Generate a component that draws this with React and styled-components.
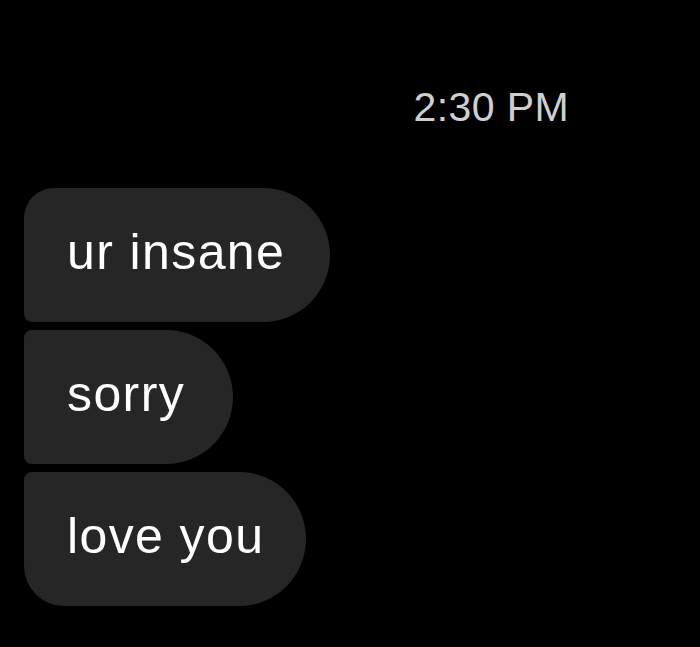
import React from "react";
import styled, { createGlobalStyle } from "styled-components";

const GlobalStyle = createGlobalStyle`
    html, body {
        margin: 0;
        padding: 0;
        background: #000;
    }
    body {
        font-family: "Liberation Sans", Arial, sans-serif;
    }
`;

const Screen = styled.div`
    width: 700px;
    height: 647px;
    background: #000;
    display: flex;
    flex-direction: column;
    padding: 84px 0 0 24px;
    box-sizing: border-box;
`;

const Timestamp = styled.div`
    align-self: flex-end;
    margin-right: 131px;
    font-size: 41px;
    line-height: 47px;
    color: #cfcfcf;
    letter-spacing: 0.4px;
`;

const Thread = styled.div`
    display: flex;
    flex-direction: column;
    align-items: flex-start;
    gap: 8px;
    margin-top: 57px;
`;

const radii = {
    first: "30px 67px 67px 8px",
    middle: "8px 67px 67px 8px",
    last: "8px 67px 67px 40px",
};

const Bubble = styled.div`
    height: 134px;
    width: ${(p) => p.width}px;
    box-sizing: border-box;
    background: #262626;
    border-radius: ${(p) => radii[p.position]};
    display: flex;
    align-items: center;
    padding-left: 43px;
    padding-bottom: 6px;
    color: #fff;
    font-size: 50px;
    letter-spacing: 1.4px;
    white-space: nowrap;
`;

const messages = [
    { text: "ur insane", width: 306, position: "first" },
    { text: "sorry", width: 209, position: "middle" },
    { text: "love you", width: 282, position: "last" },
];

const App = () => {
    return (
        <>
            <GlobalStyle />
            <Screen>
                <Timestamp>2:30 PM</Timestamp>
                <Thread>
                    {messages.map((m) => (
                        <Bubble key={m.text} width={m.width} position={m.position}>
                            {m.text}
                        </Bubble>
                    ))}
                </Thread>
            </Screen>
        </>
    );
};

export default App;
